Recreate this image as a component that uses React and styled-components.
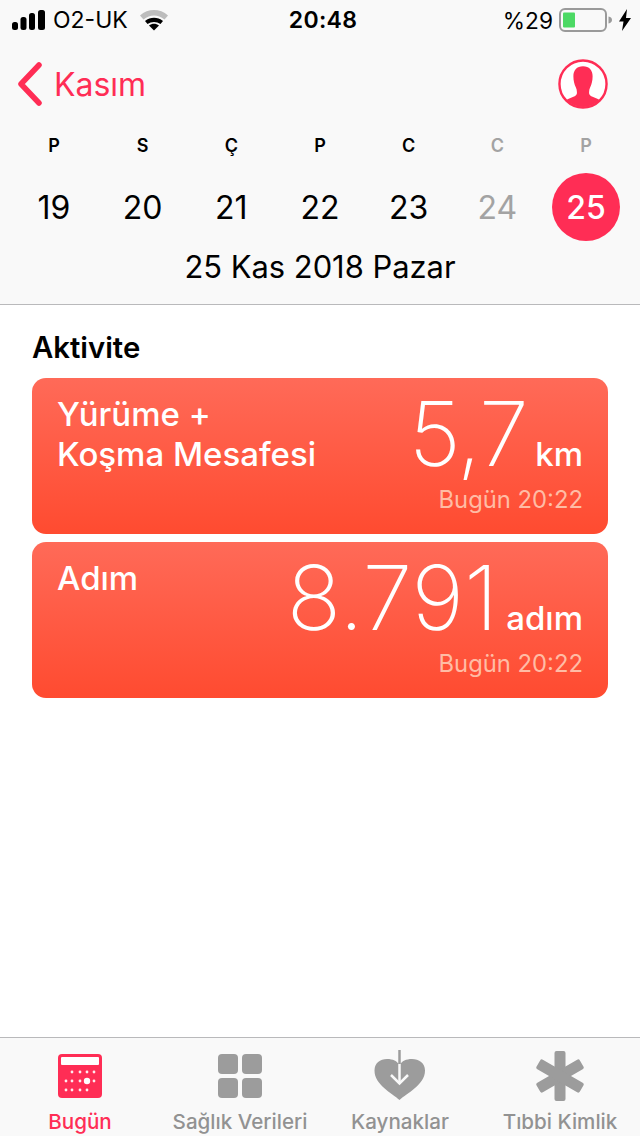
import React from 'react';
import styled, { createGlobalStyle } from 'styled-components';

const pink = '#ff2d55';
const gray = '#929292';
const iconGray = '#9c9c9c';
const barBg = '#f9f9f9';

const GlobalStyle = createGlobalStyle`
  html, body { margin: 0; padding: 0; background: #fff; }
  body { font-family: Inter, "Noto Sans", sans-serif; }
`;

const Page = styled.div`
  width: 640px;
  height: 1136px;
  display: flex;
  flex-direction: column;
  background: #fff;
  overflow: hidden;
`;

const Header = styled.header`
  height: 305px;
  flex: none;
  box-sizing: border-box;
  background: ${barBg};
  border-bottom: 1px solid #b9b9bb;
  display: flex;
  flex-direction: column;
`;

const StatusBar = styled.div`
  height: 40px;
  display: grid;
  grid-template-columns: 1fr auto 1fr;
  align-items: center;
  padding: 0 9px 0 12px;
  font-size: 23px;
  color: #000;
`;

const StatusLeft = styled.div`
  display: flex;
  align-items: center;
  gap: 8px;
`;

const StatusRight = styled.div`
  display: flex;
  align-items: center;
  justify-content: flex-end;
  gap: 6px;
  font-size: 22.700px;
`;

const Clock = styled.div`
  font-weight: 600;
  font-size: 23px;
  letter-spacing: 0.3px;
  margin-left: 3px;
`;

const WifiGlyph = styled.svg`
  margin-left: 4px;
`;

const NavRow = styled.div`
  height: 62px;
  margin-top: 13px;
  display: flex;
  align-items: center;
  justify-content: space-between;
  padding: 0 32px 0 16px;
`;

const BackLink = styled.div`
  display: flex;
  align-items: center;
  gap: 12px;
  color: ${pink};
  font-size: 32px;
`;

const Week = styled.div`
  display: grid;
  grid-template-columns: repeat(7, 88.7px);
  justify-content: center;
  margin-top: 20px;
`;

const DayLabel = styled.div`
  text-align: center;
  font-size: 18px;
  line-height: 22px;
  font-weight: 600;
  color: ${p => (p.$muted ? '#a3a3a3' : '#000')};
`;

const DayCell = styled.div`
  height: 68px;
  margin-top: 16px;
  display: flex;
  align-items: center;
  justify-content: center;
  font-size: 32px;
  color: ${p => (p.$muted ? '#a3a3a3' : '#000')};
`;

const TodayBadge = styled.div`
  width: 68px;
  height: 68px;
  border-radius: 50%;
  background: ${pink};
  color: #fff;
  font-weight: 500;
  display: flex;
  align-items: center;
  justify-content: center;
`;

const DateLine = styled.div`
  text-align: center;
  font-size: 30.900px;
  line-height: 38px;
  margin-top: 7px;
  color: #000;
`;

const Main = styled.main`
  flex: 1;
  padding: 0 32px;
`;

const SectionTitle = styled.h2`
  margin: 26px 0 13px;
  font-size: 29.300px;
  line-height: 34px;
  font-weight: 600;
  color: #000;
`;

const Cards = styled.div`
  display: flex;
  flex-direction: column;
  gap: 8px;
`;

const Card = styled.div`
  height: 156px;
  box-sizing: border-box;
  border-radius: 14px;
  background: linear-gradient(180deg, #ff6a58 0%, #ff4b30 100%);
  padding: 14px 25px 0;
  display: flex;
  justify-content: space-between;
  color: #fff;
`;

const CardTitle = styled.div`
  font-size: 33px;
  line-height: 40px;
  font-weight: 500;
  white-space: pre-line;
  padding-top: 2px;
`;

const CardRight = styled.div`
  display: flex;
  flex-direction: column;
  align-items: flex-end;
`;

const ValueRow = styled.div`
  display: flex;
  align-items: baseline;
  gap: 8px;
  height: 84px;
`;

const Value = styled.span`
  font-size: 90px;
  line-height: 84px;
  font-weight: 200;
  letter-spacing: ${p => (p.$tight ? '-1.5px' : '0')};
`;

const Unit = styled.span`
  font-size: 33px;
  font-weight: 500;
`;

const Stamp = styled.div`
  margin-top: 9px;
  font-size: 23.800px;
  line-height: 30px;
  color: #ffbca5;
`;

const TabBar = styled.nav`
  height: 99px;
  flex: none;
  box-sizing: border-box;
  background: ${barBg};
  border-top: 1px solid #b9b9bb;
  display: grid;
  grid-template-columns: repeat(4, 1fr);
`;

const Tab = styled.div`
  display: flex;
  flex-direction: column;
  align-items: center;
  color: ${p => (p.$active ? pink : gray)};
`;

const TabIcon = styled.div`
  height: 60px;
  margin-top: 8px;
  display: flex;
  align-items: center;
  justify-content: center;
`;

const TabLabel = styled.div`
  font-size: 20.600px;
  line-height: 24px;
  margin-top: 4px;
  white-space: nowrap;
  font-weight: 500;
`;

const Signal = () => (
  <svg width="33" height="20" viewBox="0 0 33 20">
    <rect x="0" y="12" width="6" height="8" rx="2.500" fill="#000" />
    <rect x="8.500" y="7" width="6" height="13" rx="2.500" fill="#000" />
    <rect x="17" y="3" width="6" height="17" rx="2.500" fill="#000" />
    <rect x="26" y="0" width="7" height="20" rx="2.500" fill="#000" />
  </svg>
);

const Wifi = () => (
  <WifiGlyph width="28" height="22" viewBox="0 0 28 22">
    <path d="M0 6.500C8-.8 20-.8 28 6.500l-3.500 4C17.500 5 10.500 5 3.500 10.500z" fill="#bdbdbd" />
    <path d="M5 12c5.500-4.400 12.500-4.400 18 0l-2.500 3c-4-2.800-9-2.800-13 0z" fill="#000" />
    <path d="M14 21.500l-5-5c3-2.200 7-2.200 10 0z" fill="#000" />
  </WifiGlyph>
);

const Battery = () => (
  <svg width="54" height="24" viewBox="0 0 54 24">
    <rect x="1" y="1" width="46" height="22" rx="5" fill="none" stroke="#9a9a9a" strokeWidth="2" />
    <rect x="4" y="4.500" width="12" height="15" rx="1" fill="#4cd964" />
    <path d="M49.500 8.500c2.500.7 3.500 1.800 3.500 3.500s-1 2.800-3.500 3.500z" fill="#9a9a9a" />
  </svg>
);

const Bolt = () => (
  <svg width="12" height="22" viewBox="0 0 12 22">
    <path d="M8 0L0 12.500h4.500L3 22l9-13H7z" fill="#000" />
  </svg>
);

const Chevron = () => (
  <svg width="26" height="44" viewBox="0 0 26 44">
    <path d="M23 3L5 22l18 19" fill="none" stroke={pink} strokeWidth="5.500" strokeLinecap="round" strokeLinejoin="round" />
  </svg>
);

const Profile = () => (
  <svg width="50" height="50" viewBox="0 0 52 52">
    <defs>
      <clipPath id="profile-clip"><circle cx="26" cy="26" r="24" /></clipPath>
    </defs>
    <circle cx="26" cy="26" r="24.500" fill="#fff" stroke={pink} strokeWidth="2.500" />
    <path
      clipPath="url(#profile-clip)"
      d="M26 7.500c-6.500 0-10 4-10 10.500 0 4.500 1 8.500 2.500 11.500 1 2 1.500 4.500 1 7-.6 2-3 3-6.500 4-2.500.8-5 2-5.500 4.500l-1 7h39l-1-7c-.5-2.500-3-3.700-5.500-4.500-3.500-1-5.900-2-6.500-4-.5-2.500 0-5 1-7C35 26.500 36 22.500 36 18c0-6.500-3.500-10.500-10-10.500z"
      fill={pink}
    />
  </svg>
);

const dots = [
  [14, 18], [22, 18], [29, 18], [36, 18],
  [8, 27], [14, 27], [22, 27], [36, 27],
  [8, 36], [14, 36], [22, 36], [29, 36],
];

const CalendarIcon = () => (
  <svg width="44" height="44" viewBox="0 0 44 44">
    <rect width="44" height="44" rx="4" fill={pink} />
    <rect x="3" y="3" width="38" height="8" rx="1" fill="#fff" />
    {dots.map(([x, y]) => (
      <circle key={`${x}-${y}`} cx={x} cy={y} r="1.400" fill="#fff" opacity="0.9" />
    ))}
    <circle cx="29" cy="27" r="3.200" fill="#fff" />
  </svg>
);

const GridIcon = () => (
  <svg width="44" height="44" viewBox="0 0 44 44" fill={iconGray}>
    <rect width="20" height="20" rx="4" />
    <rect x="24" width="20" height="20" rx="4" />
    <rect y="24" width="20" height="20" rx="4" />
    <rect x="24" y="24" width="20" height="20" rx="4" />
  </svg>
);

const HeartIcon = () => (
  <svg width="52" height="53" viewBox="0 0 52 53">
    <path d="M25.500 50C18 43 .5 35 .5 20.500 .5 13 6 9 13 9c6 0 10 2 12.500 6C28 11 32 9 38 9c7 0 13 4 13 11.500C51 35 33 43 25.500 50z" fill={iconGray} />
    <path d="M25.500 0v14" stroke={iconGray} strokeWidth="2.500" />
    <path d="M25.500 14v20" stroke={barBg} strokeWidth="2.500" />
    <path d="M17 25l8.500 8.500 8.500-8.500" fill="none" stroke={barBg} strokeWidth="2.500" />
  </svg>
);

const AsteriskIcon = () => (
  <svg width="48" height="50" viewBox="0 0 48 50">
    <g fill={iconGray}>
      <rect x="18.500" y="0" width="11" height="50" rx="2" />
      <rect x="18.500" y="0" width="11" height="50" rx="2" transform="rotate(60 24 25)" />
      <rect x="18.500" y="0" width="11" height="50" rx="2" transform="rotate(-60 24 25)" />
    </g>
  </svg>
);

const days = [
  ['P', '19'], ['S', '20'], ['Ç', '21'], ['P', '22'], ['C', '23'], ['C', '24', true], ['P', '25', true],
];

const tabs = [
  { label: 'Bugün', icon: <CalendarIcon />, active: true },
  { label: 'Sağlık Verileri', icon: <GridIcon /> },
  { label: 'Kaynaklar', icon: <HeartIcon /> },
  { label: 'Tıbbi Kimlik', icon: <AsteriskIcon /> },
];

export default function App() {
  return (
    <Page>
      <GlobalStyle />
      <Header>
        <StatusBar>
          <StatusLeft>
            <Signal />
            <span>O2-UK</span>
            <Wifi />
          </StatusLeft>
          <Clock>20:48</Clock>
          <StatusRight>
            <span>%29</span>
            <Battery />
            <Bolt />
          </StatusRight>
        </StatusBar>
        <NavRow>
          <BackLink>
            <Chevron />
            <span>Kasım</span>
          </BackLink>
          <Profile />
        </NavRow>
        <Week>
          {days.map(([d, , muted], i) => (
            <DayLabel key={i} $muted={muted}>{d}</DayLabel>
          ))}
          {days.map(([, n, muted], i) => (
            <DayCell key={n} $muted={muted}>
              {i === 6 ? <TodayBadge>{n}</TodayBadge> : n}
            </DayCell>
          ))}
        </Week>
        <DateLine>25 Kas 2018 Pazar</DateLine>
      </Header>
      <Main>
        <SectionTitle>Aktivite</SectionTitle>
        <Cards>
          <Card>
            <CardTitle>{'Yürüme +\nKoşma Mesafesi'}</CardTitle>
            <CardRight>
              <ValueRow><Value $tight>5,7</Value><Unit>km</Unit></ValueRow>
              <Stamp>Bugün 20:22</Stamp>
            </CardRight>
          </Card>
          <Card>
            <CardTitle>Adım</CardTitle>
            <CardRight>
              <ValueRow><Value>8.791</Value><Unit>adım</Unit></ValueRow>
              <Stamp>Bugün 20:22</Stamp>
            </CardRight>
          </Card>
        </Cards>
      </Main>
      <TabBar>
        {tabs.map(t => (
          <Tab key={t.label} $active={t.active}>
            <TabIcon>{t.icon}</TabIcon>
            <TabLabel>{t.label}</TabLabel>
          </Tab>
        ))}
      </TabBar>
    </Page>
  );
}
